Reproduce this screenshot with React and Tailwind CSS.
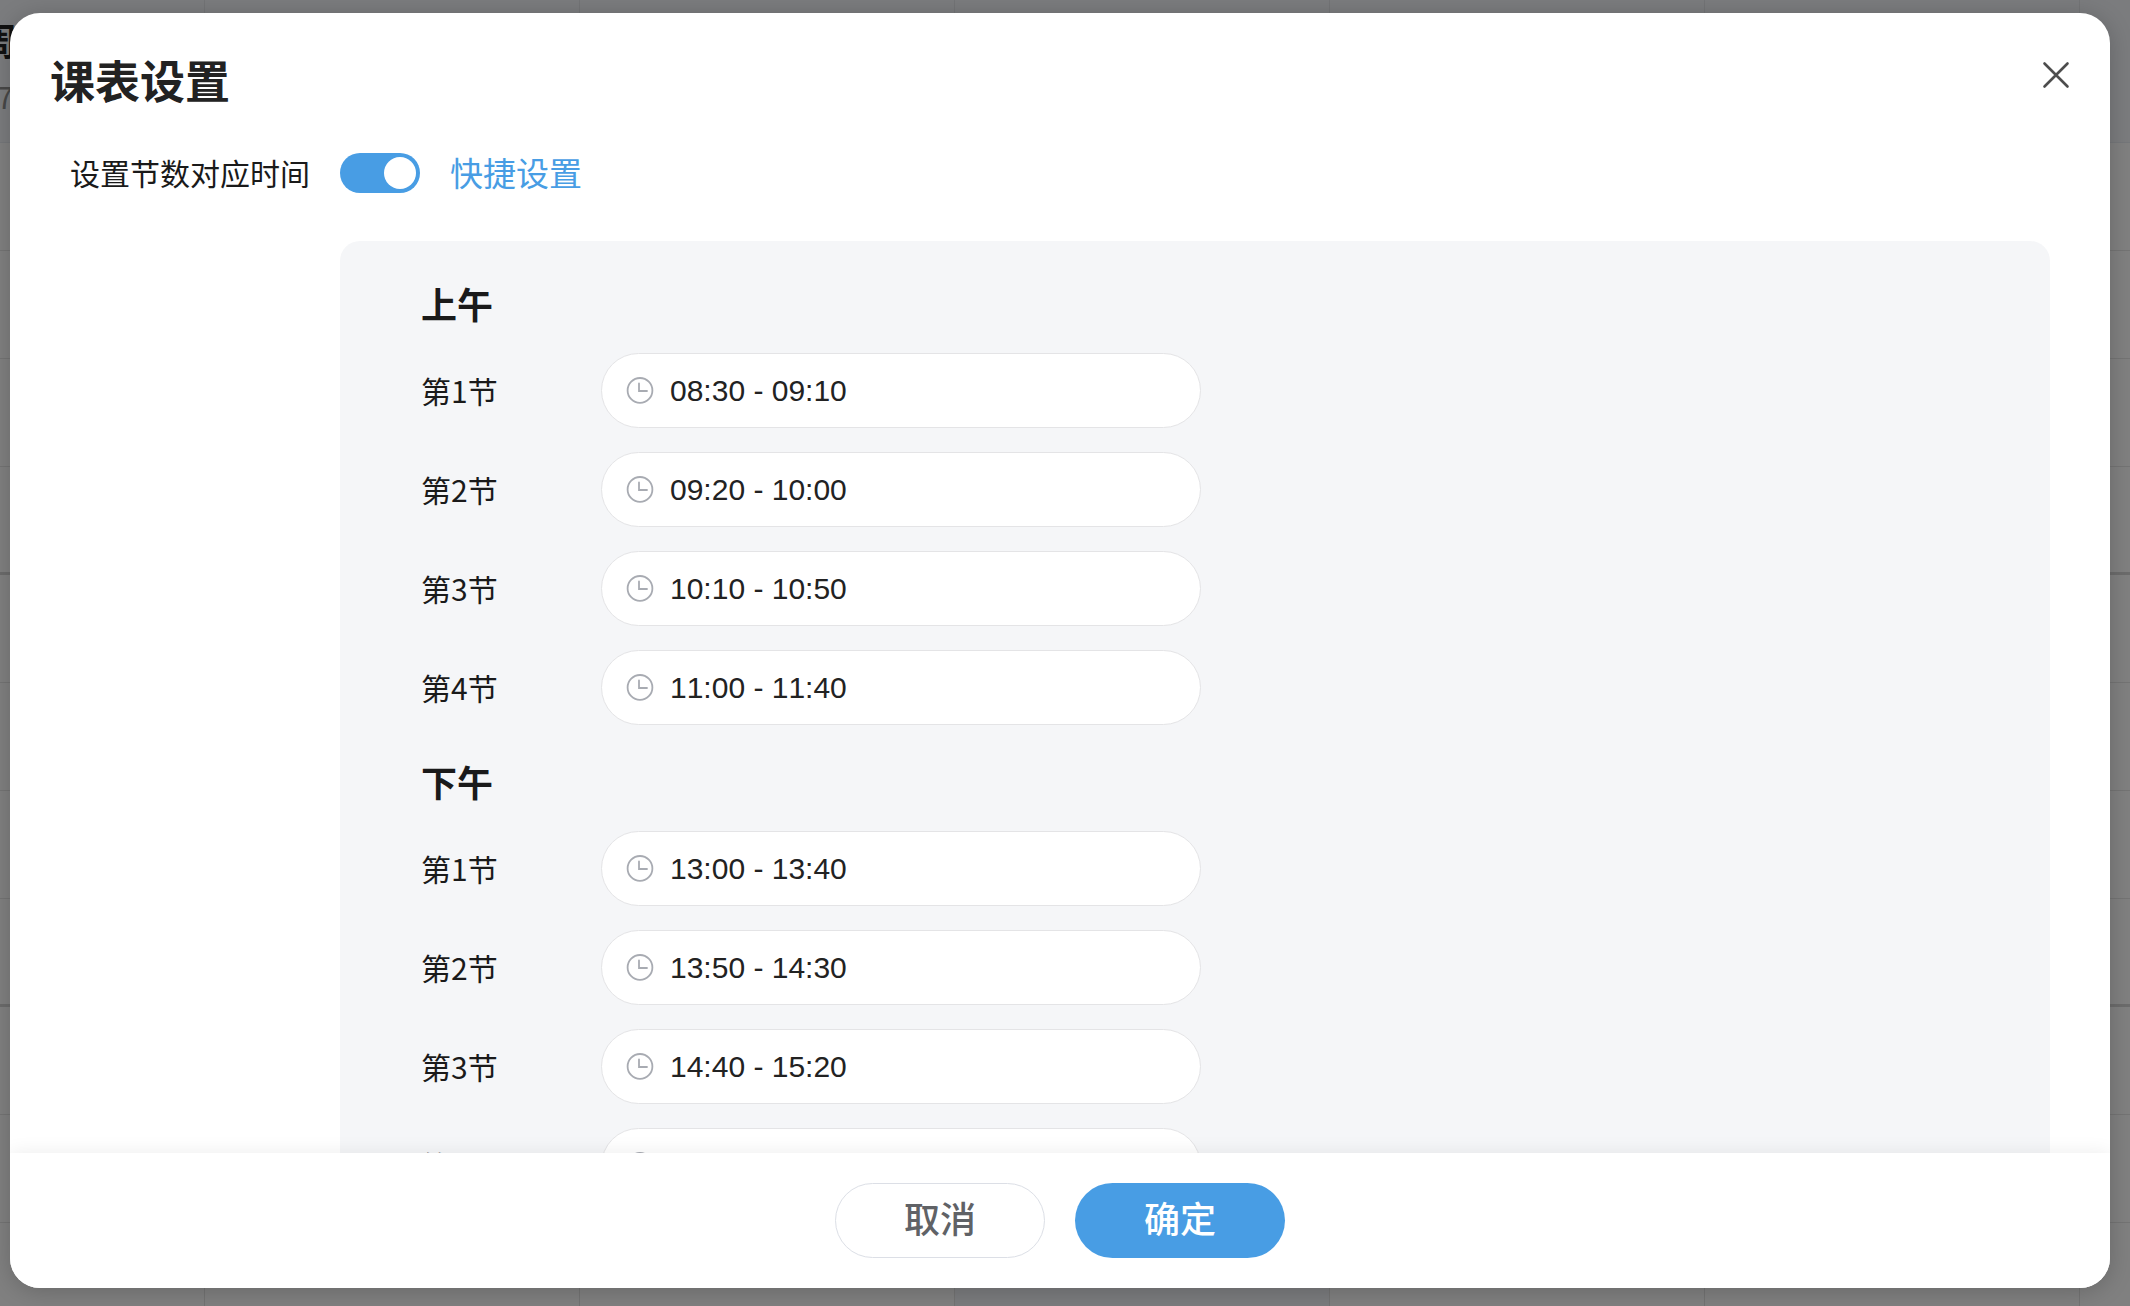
import { useState } from "react";

const groups = [
  { name: "上午", times: ["08:30 - 09:10", "09:20 - 10:00", "10:10 - 10:50", "11:00 - 11:40"] },
  { name: "下午", times: ["13:00 - 13:40", "13:50 - 14:30", "14:40 - 15:20", "15:30 - 16:10"] },
];

const rows = ["thin", "thin", "thin", "thick", "thin", "thin", "thin", "thick", "thin", "thin", "thin"];
const days = [
  { name: "周一", date: "7" },
  { name: "", date: "" },
  { name: "", date: "" },
  { name: "", date: "" },
  { name: "", date: "" },
  { name: "", date: "" },
  { name: "", date: "" },
];

function Backdrop() {
  return (
    <div aria-hidden="true" className="absolute inset-0 flex flex-col overflow-hidden bg-[#808080]">
      <div className="-ml-[170px] flex h-[143px] shrink-0 border-b border-[#75777a] bg-[#7b7c7e]">
        {days.map((d, i) => (
          <div key={i} className="w-[375px] shrink-0 border-r border-[#737476] pt-3 text-center">
            <div className="text-[36px] leading-[54px] font-bold text-[#111]">{d.name}</div>
            <div className="pr-6 text-[30px] leading-[60px] text-[#484848]">{d.date}</div>
          </div>
        ))}
      </div>
      <div className="relative flex-1">
        {rows.map((kind, i) => (
          <div
            key={i}
            className={kind === "thick" ? "h-[108px] border-b-3 border-[#6c6c6c]" : "h-[108px] border-b border-[#747474]"}
          />
        ))}
        <div className="absolute inset-y-0 -left-[170px] flex">
          {days.map((d, i) => (
            <div key={i} className={i === 3 ? "w-[375px] border-r border-[#737373] bg-[#7b7c7e]" : "w-[375px] border-r border-[#737373]"} />
          ))}
        </div>
      </div>
    </div>
  );
}

function ClockIcon() {
  return (
    <svg viewBox="0 0 28 28" className="size-7 shrink-0" fill="none" stroke="#a8abb2" strokeWidth="1.8">
      <circle cx="14" cy="13.4" r="12.4" />
      <path d="M13 6.4V14h8" strokeLinecap="round" />
    </svg>
  );
}

function TimeRow({ group, index, value }) {
  const id = `${group}-${index}`;
  return (
    <div className="flex items-center">
      <label htmlFor={id} className="w-[180px] shrink-0 text-[30px] leading-[45px] text-[#1a1a1a]">
        第{index}节
      </label>
      <div className="flex h-[75px] w-[600px] items-center gap-4 rounded-full border border-[#e4e4e6] bg-white px-6">
        <ClockIcon />
        <input
          id={id}
          defaultValue={value}
          className="min-w-0 flex-1 bg-transparent font-['Liberation_Sans',sans-serif] text-[30px] leading-[45px] text-[#222] outline-none [font-kerning:none]"
        />
      </div>
    </div>
  );
}

export default function App() {
  const [on, setOn] = useState(true);
  return (
    <div className="relative h-screen overflow-hidden pt-[13px] pr-5 pb-[18px] pl-[10px] font-['Noto_Sans_CJK_SC',sans-serif]">
      <Backdrop />
      <div
        role="dialog"
        aria-labelledby="title"
        className="relative flex h-full flex-col overflow-hidden rounded-[30px] bg-white shadow-[0_3px_24px_rgba(0,0,0,0.2)]"
      >
        <header className="flex items-start justify-between pt-[33px] pr-10 pl-10">
          <h1 id="title" className="text-[45px] leading-[68px] font-bold text-[#222]">课表设置</h1>
          <button type="button" aria-label="关闭" className="mt-[15px] text-[#4d4d4d]">
            <svg viewBox="0 0 28 28" className="size-7" fill="none" stroke="currentColor" strokeWidth="2.6" strokeLinecap="round">
              <path d="M2.5 2.5l23 23M25.5 2.5l-23 23" />
            </svg>
          </button>
        </header>
        <main className="min-h-0 flex-1 overflow-hidden pr-[60px] pl-[60px]">
          <div className="mt-[14px] flex h-[90px] items-center">
            <label htmlFor="enable" className="w-[270px] pb-0.5 text-[30px] leading-[45px] text-[#1a1a1a]">设置节数对应时间</label>
            <input
              id="enable"
              type="checkbox"
              role="switch"
              checked={on}
              onChange={(e) => setOn(e.target.checked)}
              className="flex h-10 w-20 appearance-none items-center rounded-full bg-[#bfbfbf] px-1 before:size-8 before:rounded-full before:bg-white checked:justify-end checked:bg-[#489de4]"
            />
            <a href="#quick" className="ml-[30px] pb-0.5 text-[33px] leading-[50px] text-[#489de4]">快捷设置</a>
          </div>
          <div className="mt-[23px] ml-[270px] rounded-[20px] bg-[#f5f6f8] px-[81px] pt-[34px] pb-10">
            {groups.map((g) => (
              <section key={g.name} className="mb-7">
                <h2 className="mb-[22px] text-[36px] leading-[56px] font-bold text-[#1a1a1a]">{g.name}</h2>
                <div className="flex flex-col gap-6">
                  {g.times.map((t, i) => (
                    <TimeRow key={t} group={g.name} index={i + 1} value={t} />
                  ))}
                </div>
              </section>
            ))}
          </div>
        </main>
        <footer className="relative flex h-[135px] shrink-0 items-center justify-center gap-[30px] bg-white font-['Liberation_Sans','Noto_Sans_CJK_SC',sans-serif] shadow-[0_0_18px_rgba(0,0,0,0.08)]">
          <button type="button" className="h-[75px] w-[210px] rounded-full border border-[#dcdfe6] text-[36px] font-medium text-[#606266]">取消</button>
          <button type="button" className="h-[75px] w-[210px] rounded-full bg-[#489de4] text-[36px] font-medium text-white">确定</button>
        </footer>
      </div>
    </div>
  );
}
